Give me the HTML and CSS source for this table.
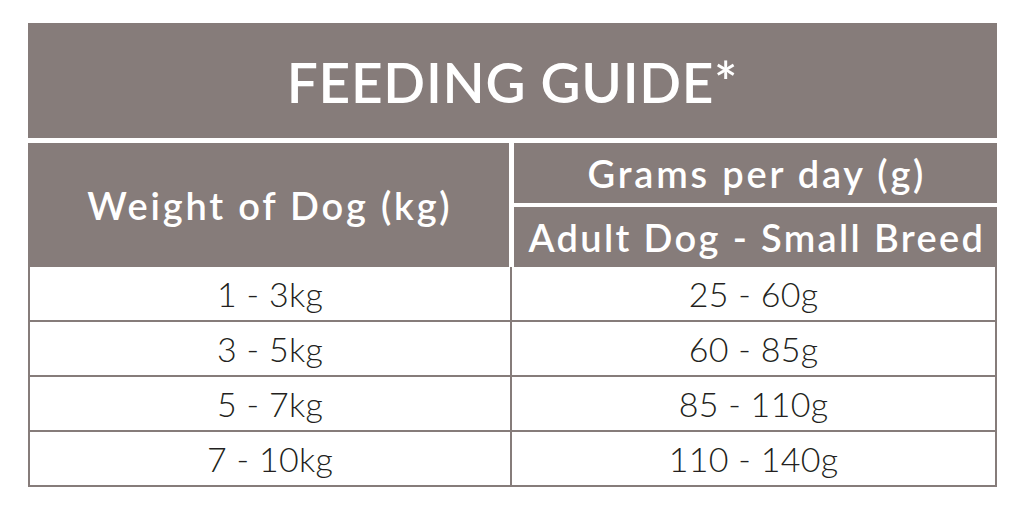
FILE: index.html
```html
<!DOCTYPE html>
<html>
<head>
<meta charset="utf-8">
<link rel="stylesheet" href="styles.css">
</head>
<body>
<div class="guide">
  <div class="title">FEEDING GUIDE*</div>
  <div class="head">
    <div class="h-weight">Weight of Dog (kg)</div>
    <div class="h-grams">Grams per day (g)</div>
    <div class="h-breed">Adult Dog - Small Breed</div>
  </div>
  <div class="rows">
    <div class="cell left">1 - 3kg</div><div class="cell">25 - 60g</div>
    <div class="cell left">3 - 5kg</div><div class="cell">60 - 85g</div>
    <div class="cell left">5 - 7kg</div><div class="cell">85 - 110g</div>
    <div class="cell left">7 - 10kg</div><div class="cell">110 - 140g</div>
  </div>
</div>
</body>
</html>
```
FILE: styles.css
```css
html, body {
  margin: 0;
  padding: 0;
  background: #ffffff;
}
body {
  font-family: Lato, "Liberation Sans", sans-serif;
}
.guide {
  width: 969px;
  margin: 23px 0 0 28px;
}
.title {
  height: 115px;
  background: #867c7a;
  color: #ffffff;
  font-size: 55px;
  font-weight: 600;
  display: flex;
  align-items: center;
  justify-content: center;
  letter-spacing: 0.7px;
  padding-top: 3px;
  box-sizing: border-box;
}
.head {
  margin-top: 5px;
  display: grid;
  grid-template-columns: 481px 483px;
  grid-template-rows: 60px 60px;
  column-gap: 5px;
  row-gap: 4px;
  color: #ffffff;
  font-weight: 600;
  font-size: 38px;
  letter-spacing: 2.8px;
}
.head > div {
  background: #867c7a;
  display: flex;
  align-items: center;
  justify-content: center;
  padding-left: 2.8px;
}
.h-weight {
  grid-row: 1 / 3;
  grid-column: 1;
}
.h-grams { grid-row: 1; grid-column: 2; }
.h-breed {
  grid-row: 2;
  grid-column: 2;
  letter-spacing: 2.35px;
}
.rows {
  display: grid;
  grid-template-columns: 482px 483px;
  border-left: 2px solid #867c7a;
  border-right: 2px solid #867c7a;
}
.cell {
  height: 53px;
  border-bottom: 2px solid #867c7a;
  display: flex;
  align-items: center;
  justify-content: center;
  font-size: 34px;
  font-weight: 300;
  letter-spacing: 0.3px;
  color: #231f20;
}
.cell.left {
  border-right: 2px solid #867c7a;
}
```
